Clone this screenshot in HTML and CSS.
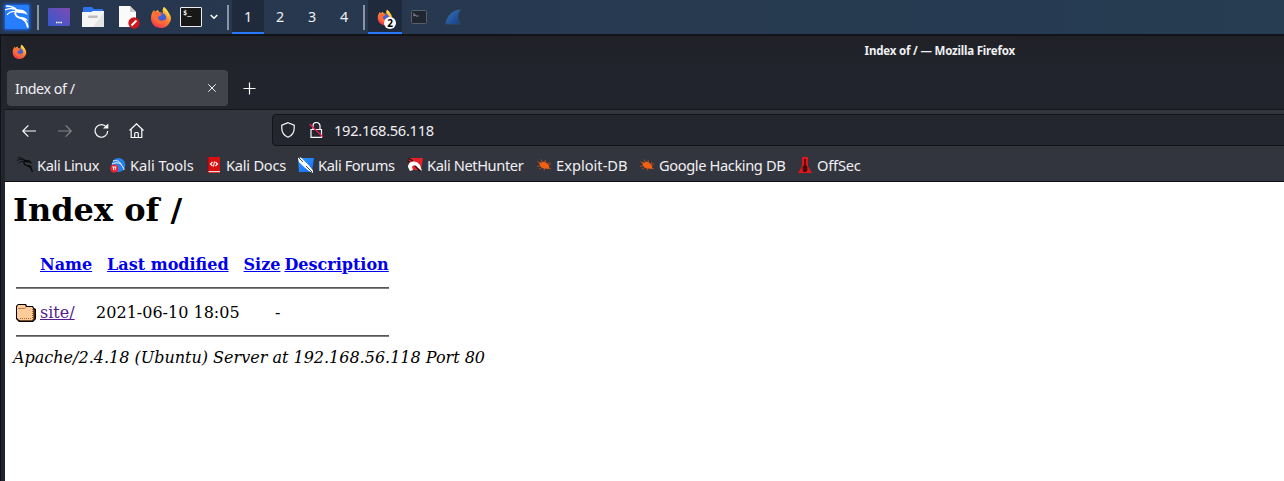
FILE: index.html
```
<!DOCTYPE html>
<html lang="en">
<head>
<meta charset="utf-8">
<title>Index of /</title>
<link rel="stylesheet" href="styles.css">
</head>
<body>
<svg class="defs" width="0" height="0" aria-hidden="true">
  <defs>
    <linearGradient id="flame" x1="0.8" y1="0" x2="0.3" y2="1"><stop offset="0" stop-color="#ffe04b"/><stop offset=".45" stop-color="#ff9230"/><stop offset="1" stop-color="#f0324f"/></linearGradient>
    <linearGradient id="desk" x1="0" y1="1" x2="1" y2="0"><stop offset="0" stop-color="#3558cf"/><stop offset="1" stop-color="#7d4bb2"/></linearGradient>
    <linearGradient id="sky" x1="0" y1="0" x2="1" y2="1"><stop offset="0" stop-color="#299cff"/><stop offset="1" stop-color="#1767f5"/></linearGradient>
    <linearGradient id="fin" x1="0" y1="0" x2="1" y2="1"><stop offset="0" stop-color="#3979c4"/><stop offset="1" stop-color="#103c83"/></linearGradient>
    <symbol id="firefox" viewBox="0 0 22 22">
      <path d="M14 1c2 2 3 3 4 5 3 3 4 7 2 10-2 4-5 6-9 6C5 22 1 18 1 12c0-3 1-6 3-8l1 2c1-1 2-2 3-2l1 2 4 1c-1-3 0-5 1-6z" fill="url(#flame)"/>
      <circle cx="11" cy="12" r="5.3" fill="#4260d8"/>
      <path d="M3 7c3-2 5-1 7 0l2 1c-1 2-3 2-4 3 0 3 3 5 6 3 1 0 2-1 3-1-2 6-11 7-13 0z" fill="#ff6a35"/>
      <path d="M13 4c4 2 5 5 5 8 2-4 0-7-2-9l-2-2z" fill="#ffd54b"/>
    </symbol>
    <symbol id="dragon" viewBox="0 0 24 24">
      <path d="M1 1c5 0 8 1 11 4M0 5c5-2 9-2 13 1M2 10c2-3 5-4 10-3.500" fill="none" stroke="currentColor" stroke-width="1.300"/>
      <path d="M12 5c-3 3-2 6 2 7.500 5 1 8 4 9 10" fill="none" stroke="currentColor" stroke-width="1.900"/>
      <path d="M11 4l3 .5 4 .5 3 2 1.500 3-3-1.500-4-.5-3 0zM15 12c4 0 7 1 8 4-3-1.500-5-2-8-2z" fill="currentColor"/>
    </symbol>
    <symbol id="bug" viewBox="0 0 16 16">
      <path d="M1.500 4.500l4 3M5 2.500l2 4M9 3l1 4M13 5l-2 3M1 9.500l5-1.500M3 12l4-2M8 13.500l1-3M12 8l3-1.500M12 11l3 1" stroke="#b84e1c" stroke-width=".9"/>
      <path d="M3 5.500l3 0 2-1 3 2 2.500 3-1 2.500-3-.5-2 0-3-2z" fill="#f26012"/>
    </symbol>
  </defs>
</svg>

<header class="panel">
  <span class="menu"><svg width="24" height="24"><use href="#dragon"/></svg></span>
  <i class="sep sep-menu"></i>
  <svg class="launch-desk" width="22" height="18" viewBox="0 0 22 18"><rect width="22" height="18" rx="1" fill="url(#desk)"/><path d="M8 14.5h1.600m.7 0h1.400m.7 0h1.600" stroke="#fff" stroke-width="1.4"/></svg>
  <svg class="launch-files" width="22" height="20" viewBox="0 0 22 20"><path d="M1 6V1q0-1 1-1h8l2 2h9v4z" fill="#2c72e8"/><path d="M0 5h9l2-1h11v16H0z" fill="#f5f5f5"/><path d="M22 5v15H11z" fill="#e5e5e5"/><rect x="6" y="8.500" width="10" height="2.500" rx="1.200" fill="#bdbdbd"/></svg>
  <svg class="launch-doc" width="21" height="23" viewBox="0 0 21 23"><path d="M0 0h11l6 6v15H0z" fill="#fafafa"/><path d="M11 0l6 6h-6z" fill="#ccc"/><circle cx="15" cy="17" r="5.700" fill="#cf171b"/><path d="M12.500 19.500l5-5" stroke="#fff" stroke-width="2"/></svg>
  <svg class="launch-fox" width="22" height="22"><use href="#firefox"/></svg>
  <span class="launch-term">$_</span>
  <svg class="chevron" width="8" height="6" viewBox="0 0 8 6"><path d="M.7 1L4 4.300 7.300 1" fill="none" stroke="#fff" stroke-width="1.500"/></svg>
  <i class="sep sep-spaces"></i>
  <nav class="spaces"><span class="space active">1</span><span class="space">2</span><span class="space">3</span><span class="space">4</span></nav>
  <i class="sep sep-tasks"></i>
  <span class="task"><svg width="16" height="16"><use href="#firefox"/></svg><b class="count">2</b></span>
  <svg class="task-term" width="16" height="14" viewBox="0 0 16 14"><rect x=".5" y=".5" width="15" height="13" rx="1" fill="#202630" stroke="#56606b"/><path d="M3 3v3l2-1M5 6h2.500" fill="none" stroke="#a5abb2" stroke-width=".8"/></svg>
  <svg class="task-shark" width="16" height="16" viewBox="0 0 16 16"><path d="M.5 15C2 7 7 1 15.500.7 12 5 12 10 15 15z" fill="url(#fin)" stroke="#3a536f" stroke-width=".7"/></svg>
</header>

<section class="window">
  <div class="titlebar"><svg width="15" height="15"><use href="#firefox"/></svg><span class="title">Index of / — Mozilla Firefox</span></div>
  <div class="tabs">
    <div class="tab"><span>Index of /</span><svg width="8" height="8" viewBox="0 0 8 8"><path d="M.3.3l7.400 7.400M7.700.3L.3 7.700" stroke="#f2f2f2"/></svg></div>
    <svg class="plus" width="13" height="13" viewBox="0 0 13 13"><path d="M6.500 .5v12M.5 6.500h12" stroke="#fbfbfe" stroke-width="1.200"/></svg>
  </div>
  <div class="chrome">
    <div class="toolbar">
      <svg width="14" height="14" viewBox="0 0 14 14"><path d="M14 7H.8M6.300 1.300L.8 7l5.500 5.700" class="line"/></svg>
      <svg class="dim" width="14" height="14" viewBox="0 0 14 14"><path d="M0 7h13.200M7.700 1.300L13.200 7l-5.500 5.700" class="line"/></svg>
      <svg width="15" height="15" viewBox="0 0 15 15"><path d="M12.500 4.200A6.300 6.300 0 1 0 13.700 8" class="line"/><path d="M14.300.500v5H9z" fill="#fbfbfe"/></svg>
      <svg class="home" width="15" height="16" viewBox="0 0 15 16"><path d="M.5 7.500L7.500.8l7 6.700M2.200 6.200v8.300h10.600V6.200M5.700 14.500v-4q0-1 1-1h1.600q1 0 1 1v4" class="line"/></svg>
      <div class="url">
        <svg width="14" height="16" viewBox="0 0 14 16"><path d="M7 .7l6.200 2.500v3c0 4-2 7.300-6.200 9.100C2.800 13.500.8 10.200.8 6.200v-3z" class="line"/></svg>
        <svg class="lock" width="15" height="16" viewBox="0 0 15 16"><path d="M4 7V4a3.500 3.500 0 0 1 7 0v3M2 7.500h10.500v7.800H2z" class="line"/><path d="M.5 2l13.500 13" stroke="#f0184f" stroke-width="1.300"/></svg>
        <span class="address-text">192.168.56.118</span>
      </div>
    </div>
    <nav class="bookmarks">
      <a class="bm b1"><svg class="black" width="16" height="16"><use href="#dragon"/></svg>Kali Linux</a>
      <a class="bm b2"><svg width="16" height="16" viewBox="0 0 16 16"><circle cx="8.500" cy="8" r="6.900" fill="#2380ef"/><path d="M3 4c4-1 6 0 8 3M2 7c4-2 7-1 9 0 1 3 3 3 3 6" fill="none" stroke="#fff"/><circle cx="4.300" cy="11.500" r="3.900" fill="#ef2530"/><path d="M2.300 10h4M3.500 10v3M5.300 10v3" stroke="#fff" stroke-width=".9"/></svg>Kali Tools</a>
      <a class="bm b3"><svg width="16" height="16" viewBox="0 0 16 16"><path d="M2 0h12v16H2z" fill="#d9100f"/><path d="M2 14h12v1.200H2z" fill="#ddd"/><path d="M2 0v16" stroke="#8b0d12"/><path d="M6.500 5l-2 2 2 2M8.500 4.500l-1 5M9.500 5l2 2-2 2" fill="none" stroke="#fff" stroke-width="1.100"/></svg>Kali Docs</a>
      <a class="bm b4"><svg width="16" height="16" viewBox="0 0 16 16"><path d="M0 1h16l-2 14H1z" fill="url(#sky)"/><path d="M0 1l3-.5 4 4 4 4 4 5 0 2.500-4-2-5-4-5-5z" fill="#fff"/><path d="M1 1l4 4M8 9l6 6" stroke="#14202c" stroke-width=".8"/></svg>Kali Forums</a>
      <a class="bm b5"><svg width="16" height="16" viewBox="0 0 16 16"><path d="M2 1h14l-2 12H2z" fill="#e8202b"/><path d="M1 10c0-6 8-8 12-2l2 6-4-3c-3-4-5-3-6-1l1 3-3 1z" fill="#fff"/><path d="M0 4l3 1M1 1l5 3M8 9l5 5" fill="none" stroke="#151515" stroke-width="1.100"/></svg>Kali NetHunter</a>
      <a class="bm b6"><svg width="16" height="16"><use href="#bug"/></svg>Exploit-DB</a>
      <a class="bm b7"><svg width="16" height="16"><use href="#bug"/></svg>Google Hacking DB</a>
      <a class="bm b8"><svg width="16" height="16" viewBox="0 0 16 16"><path d="M5 0h6v9l4 7H1l4-7z" fill="#dd171c"/><path d="M7.200 2h1.600v6l1.500 2v3l-1 2H6.700l-1-2v-3l1.500-2z" fill="#410a0c"/></svg>OffSec</a>
    </nav>
  </div>
  <main class="page">
    <h1>Index of /</h1>
    <table>
      <tr><th class="ico"></th><th><a>Name</a></th><th><a>Last modified</a></th><th><a>Size</a></th><th><a>Description</a></th></tr>
      <tr><th colspan="5"><hr></th></tr>
      <tr>
        <td class="ico"><svg width="20" height="22" viewBox="0 0 20 22"><path d="M2 3h8l1 2h6l1 2 2 1v10l-3 3H3l-3-3V5z" fill="#000"/><path d="M17 8l1.500 1v9l-2.500 2H4l-1-1h13l1-2z" fill="#7a4c26"/><path d="M1 6l1-2h7l1 2h6l1 1v11l-1 1H3l-2-2z" fill="#ffcc99"/><path d="M2 7.500h6.500l1.500-1" fill="none" stroke="#b97b49"/><path d="M16.500 8v9M4 17.500h12" fill="none" stroke="#a4683a" stroke-dasharray="1 1"/></svg></td>
        <td><a class="visited">site/</a></td><td class="num">2021-06-10 18:05</td><td class="num">-</td><td>&nbsp;</td>
      </tr>
      <tr><th colspan="5"><hr></th></tr>
    </table>
    <address>Apache/2.4.18 (Ubuntu) Server at 192.168.56.118 Port 80</address>
  </main>
</section>
</body>
</html>
```
FILE: styles.css
```
* { box-sizing: border-box; }
body { margin: 0; width: 1284px; height: 481px; overflow: hidden; display: flex; flex-direction: column; background: #1b1d26; font-family: "Noto Sans", sans-serif; color: #f0f0f3; }
svg { display: block; flex: none; }
.defs { position: absolute; }

.panel { flex: none; height: 34px; display: flex; align-items: center; background: linear-gradient(90deg, #27364e, #263d52); }
.menu { width: 24px; height: 24px; margin: 0 0 0 5px; background: #267eff; box-shadow: 0 0 3px 1px #1768ef; color: #fff; }
.sep { width: 2px; height: 25px; background: #8b95a1; }
.sep-menu { margin: 0 9px 0 8px; }
.launch-files { margin-left: 12px; }
.launch-doc { margin: 1px 0 0 15px; }
.launch-fox { margin: -1px 0 0 10px; }
.launch-term { width: 22px; height: 20px; margin-left: 8px; padding-left: 2px; border: 1px solid #eee; border-radius: 1px; background: #181818; font: bold 7px/11px "DejaVu Sans Mono", monospace; }
.chevron { margin-left: 8px; }
.sep-spaces { margin: 0 3px 0 9px; }
.spaces { display: flex; height: 34px; }
.space { width: 32px; text-align: center; font-size: 14.3px; line-height: 33px; }
.space.active, .task { background: #1f2b3c; border-bottom: 2px solid #2777ff; }
.sep-tasks { margin: 0 3px; }
.task { position: relative; width: 34px; height: 34px; padding: 9px; }
.count { position: absolute; left: 16px; top: 17px; width: 12px; height: 12px; border-radius: 50%; background: #fff; color: #000; font-size: 10px; line-height: 12px; text-align: center; }
.task-term { margin-left: 9px; }
.task-shark { margin-left: 18px; }

.window { flex: 1; display: flex; flex-direction: column; padding-left: 5px; border-top: 2px solid #111318; background: #22242d; box-shadow: inset 1px 0 #101219; }
.titlebar { flex: none; height: 33px; display: flex; align-items: center; padding: 0 269px 3px 7px; justify-content: space-between; background: linear-gradient(#1f2126, #22242d); }
.title { font-size: 11.5px; letter-spacing: -0.19px; font-weight: bold; line-height: 18px; }
.tabs { flex: none; height: 41px; display: flex; align-items: center; padding: 0 0 2px 2px; border-bottom: 1px solid #14161c; }
.tab { width: 221px; height: 36px; display: flex; align-items: center; justify-content: space-between; padding: 0 12px 0 8px; border-radius: 4px; background: #42444c; font-size: 14.3px; letter-spacing: -0.45px; }
.plus { margin-left: 15px; }
.chrome { flex: none; height: 72px; background: #33353e; border-bottom: 1px solid #0e1016; }
.toolbar { height: 41px; display: flex; align-items: center; padding-left: 17px; gap: 22px; }
.line { fill: none; stroke: #fbfbfe; stroke-width: 1.2; }
.home { margin-left: -2px; }
.dim { opacity: .4; }
.url { width: 1020px; height: 32px; margin: -1px -10px 0 106px; flex: none; display: flex; align-items: center; padding-left: 8px; border: 1px solid #111319; border-radius: 4px; background: #23252f; font-size: 14.67px; letter-spacing: -0.3px; }
.address-text { line-height: 18px; padding-bottom: 1px; }
.lock { margin: 0 10px 0 14px; }
.bookmarks { display: flex; height: 30px; padding-left: 12px; font-size: 14.67px; line-height: 28px; letter-spacing: -0.4px; }
.bm { display: flex; align-items: center; gap: 4px; white-space: nowrap; flex: none; width: 93px; height: 28px; }
.b2 { width: 96px; letter-spacing: -0.05px; }
.b3 { width: 92px; letter-spacing: -0.25px; }
.b4 { width: 109px; }
.b5 { width: 129px; }
.b6 { width: 103px; letter-spacing: 0; }
.b7 { width: 158px; }
.b8 { letter-spacing: -0.2px; }
.black { color: #08090b; }

.page { flex: 1; padding: 9px 8px 8px; background: #fff; color: #000; font: 16px "DejaVu Serif", serif; }
.page h1 { margin: 0 0 21px; font-size: 32px; line-height: 38px; }
.page table { border-spacing: 2px; }
.page th, .page td { padding: 1px; line-height: 19px; }
.page a { color: #0000ee; text-decoration: underline; }
.page a.visited { color: #551a8b; }
.page hr { margin: 8px 0; height: 2px; border: 0; background: linear-gradient(#555 50%, #808080 50%); }
.ico { width: 22px; height: 24px; }
.num { text-align: right; }
.page address { line-height: 19px; }
```
